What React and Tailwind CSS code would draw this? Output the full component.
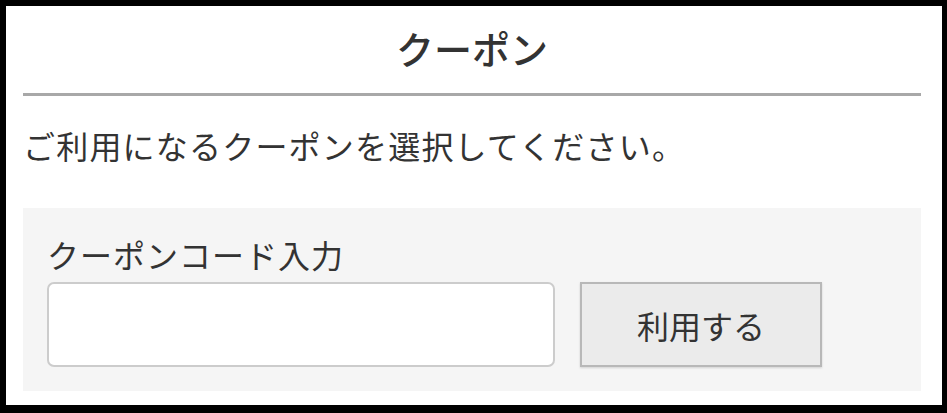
export default function App() {
  return (
    <div className="w-[947px] h-[413px] bg-black pt-[6px] pl-[6px] pr-[5px] pb-[8px] font-['Noto_Sans_CJK_JP',sans-serif] text-[#333]">
      <div className="h-full bg-white pl-[17px] pr-[21px] flex flex-col">
        {/* Header */}
        <div className="h-[90px] flex items-center justify-center border-b-[3px] border-[#a8a8a8]">
          <h1 className="text-[38px] leading-none font-medium pb-[4px]">クーポン</h1>
        </div>

        {/* Description */}
        <p className="mt-[33px] text-[32px] leading-[32px] tracking-[1.2px]">
          ご利用になるクーポンを選択してください。
        </p>

        {/* Coupon code form */}
        <div className="mt-[47px] bg-[#f5f5f5] px-[24px] pt-[30px] pb-[24px]">
          <label htmlFor="couponCode" className="block text-[32px] leading-[32px] tracking-[1px]">
            クーポンコード入力
          </label>
          <div className="mt-[12px] flex items-center gap-[25px]">
            <input
              id="couponCode"
              type="text"
              className="w-[508px] h-[85px] bg-white border-2 border-[#cccccc] rounded-[7px] px-3 text-[28px] outline-none"
            />
            <button
              type="button"
              className="w-[242px] h-[85px] bg-[#ebebeb] border-2 border-[#b8b8b8] shadow-[0_1px_2px_rgba(0,0,0,0.15)] text-[32px] text-[#333]"
            >
              利用する
            </button>
          </div>
        </div>
      </div>
    </div>
  );
}
